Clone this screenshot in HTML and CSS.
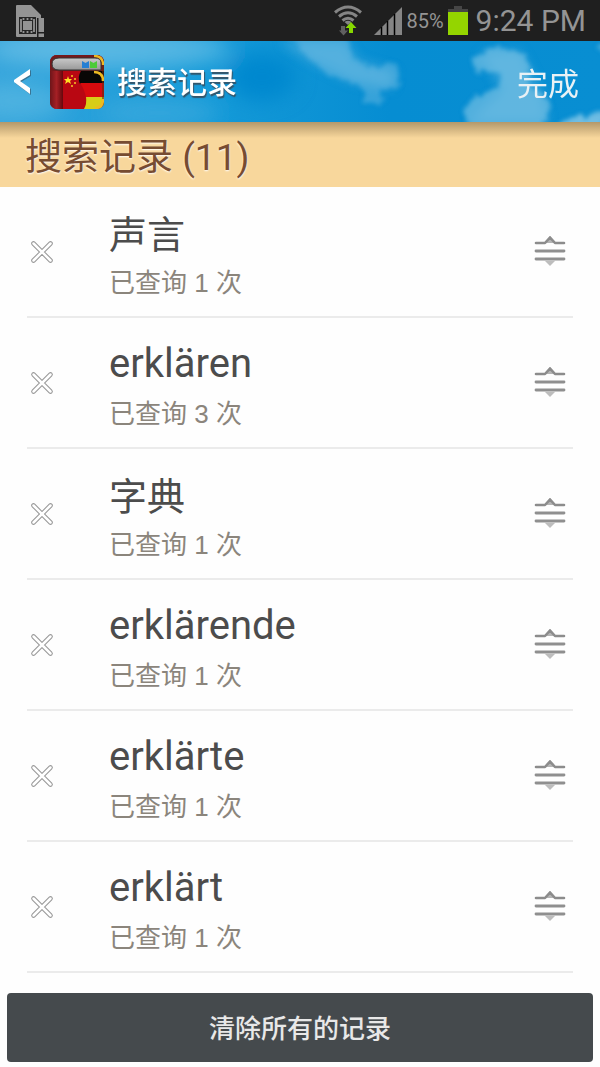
FILE: index.html
```
<!DOCTYPE html>
<html lang="zh-CN">
<head>
<meta charset="utf-8">
<meta name="viewport" content="width=device-width, initial-scale=1">
<title>搜索记录</title>
<link rel="stylesheet" href="styles.css">
</head>
<body>
<svg class="defs" width="0" height="0" aria-hidden="true">
  <defs>
    <symbol id="remove" viewBox="0 0 24 24">
      <path d="M3.500 3.500 20.500 20.500M20.500 3.500 3.500 20.500" stroke="#989898" stroke-width="4.600" stroke-linecap="round"/>
      <path d="M3.500 3.500 20.500 20.500M20.500 3.500 3.500 20.500" stroke="#fff" stroke-width="2.500" stroke-linecap="round"/>
    </symbol>
    <symbol id="drag" viewBox="0 0 32 32">
      <path d="M10 8 16 1 22 8Z" fill="#b5b5b5"/>
      <path d="M2 8H11L16 2.500 21 8H30" fill="none" stroke="#8c8c8c" stroke-width="2.600" stroke-linecap="round" stroke-linejoin="round"/>
      <path d="M2 16H30M2 24H30" stroke="#8f8f8f" stroke-width="2.800" stroke-linecap="round"/>
      <path d="M10.500 25.500H21.500L16 31Z" fill="#bdbdbd"/>
    </symbol>
  </defs>
</svg>

<div class="status">
  <svg class="sim" viewBox="0 0 30 34" aria-hidden="true">
    <path d="M2 1H16L26 11V14H22V33H2Q1 33 1 32V2Q1 1 2 1Z" fill="#949494"/>
    <path d="M4 13H21V30H4Z" fill="#262626"/>
    <path d="M8 17H17V26H8Z" fill="#949494"/>
    <path d="M8.500 14V16M12.500 14V16M16.500 14V16M8.500 27V29M12.500 27V29M16.500 27V29M6 15V28M19 15V28" stroke="#949494" stroke-width="1.800"/>
    <path d="M23.500 14H29V28H23.500ZM23.500 29.500H29V33H23.500Z" fill="#949494"/>
  </svg>
  <svg class="wifi" viewBox="0 0 28 31" aria-hidden="true">
    <g fill="none" stroke="#858585" stroke-width="3">
      <path d="M1 7.500Q14-3.500 27 7.500"/><path d="M5 11.500Q14 4 23 11.500"/><path d="M8.500 15.500Q14 11 19.500 15.500"/>
    </g>
    <path d="M10.500 17Q14 14.500 17.500 17L14 20Z" fill="#858585"/>
    <path d="M7 21H11V25.500H14L9.500 30.500 5 25.500H7Z" fill="#606060"/>
    <path d="M15 28V23H11.500L17 17 22.500 23H19V28Z" fill="#86d800"/>
  </svg>
  <svg class="signal" viewBox="0 0 28 28" aria-hidden="true">
    <path d="M0 28 28 0V28Z" fill="#858585"/>
    <path d="M7.500 20V28M13.500 14V28M20.500 7V28" stroke="#000" stroke-width="1.500"/>
  </svg>
  <span class="percent">85%</span>
  <svg class="battery" viewBox="0 0 20 29" aria-hidden="true"><path d="M6 0H14V3H20V6H0V3H6Z" fill="#464646"/><path d="M0 6H20V29H0Z" fill="#94d500"/></svg>
  <span class="clock">9:24 PM</span>
</div>

<header class="header">
  <svg class="sky" viewBox="0 0 600 81" preserveAspectRatio="xMidYMid slice" aria-hidden="true">
    <defs>
      <linearGradient id="blue"><stop offset="0" stop-color="#35a5dc"/><stop offset=".35" stop-color="#159ad8"/><stop offset=".65" stop-color="#068dd2"/><stop offset="1" stop-color="#088ed2"/></linearGradient>
      <filter id="cloud" x="-20%" y="-40%" width="140%" height="180%">
        <feTurbulence type="fractalNoise" baseFrequency=".12" numOctaves="4" seed="3" result="n"/>
        <feDisplacementMap in="SourceGraphic" in2="n" scale="13" xChannelSelector="R" yChannelSelector="G"/>
        <feGaussianBlur stdDeviation="2"/>
      </filter>
      <filter id="haze" x="-30%" y="-50%" width="160%" height="200%"><feGaussianBlur stdDeviation="10"/></filter>
      <filter id="soft" x="-30%" y="-50%" width="160%" height="200%"><feGaussianBlur stdDeviation="6"/></filter>
    </defs>
    <rect width="600" height="81" fill="url(#blue)"/>
    <g filter="url(#haze)">
      <ellipse cx="110" cy="8" rx="120" ry="20" fill="#7cc8ea" opacity=".6"/>
      <ellipse cx="20" cy="60" rx="45" ry="18" fill="#66bfe6" opacity=".5"/>
      <ellipse cx="160" cy="72" rx="60" ry="14" fill="#4bb2e0" opacity=".5"/>
      <ellipse cx="262" cy="36" rx="34" ry="24" fill="#0088cf"/>
    </g>
    <g filter="url(#soft)" fill="#5fb5e0" opacity=".6">
      <path d="M280 0H346L358 20 396 30 392 48 350 40 310 20Z"/>
      <path d="M480 12 520 10 540 50 548 81H468L503 48Z"/>
    </g>
    <g filter="url(#cloud)" fill="#70bde3">
      <path d="M286-8H346L352 18 372 28 395 22 400 46 380 48 388 60 366 62 358 44 326 32 306 14Z" opacity=".45"/>
      <path d="M472 16 480 12 492 6 522 11 530 28 530 46 552 62 540 92H470L463 70 476 54 498 46 504 32 474 30Z" opacity=".7"/>
      <path d="M558 84 570 78 582 74 604 73V90H558Z"/>
      <path d="M596 4H610V18Z" opacity=".7"/>
    </g>
  </svg>
  <button class="back" aria-label="返回">
    <svg class="chevron" viewBox="0 0 18 28" aria-hidden="true"><path d="M17 2V8L7 14 17 21V27L1 15V13Z" fill="#355b73" opacity=".7"/><path d="M16 1V7L6 13 16 20V26L0 14V12Z" fill="#fff"/></svg>
    <svg class="book" viewBox="0 0 54 54" aria-hidden="true">
      <defs>
        <clipPath id="cover"><rect width="54" height="54" rx="7"/></clipPath>
        <linearGradient id="spine"><stop offset="0" stop-color="#6d1519"/><stop offset=".5" stop-color="#a52025"/><stop offset="1" stop-color="#66080d"/></linearGradient>
        <linearGradient id="pages" x1="0" y1="0" x2="0" y2="1"><stop offset="0" stop-color="#c9c9c9"/><stop offset="1" stop-color="#989898"/></linearGradient>
      </defs>
      <g clip-path="url(#cover)">
        <rect width="54" height="54" fill="#b90712"/>
        <rect width="13" height="54" fill="url(#spine)"/>
        <rect width="54" height="16" fill="#74191b"/>
        <path d="M31 16H54V29H30Q27 22 31 16Z" fill="#090706"/>
        <path d="M30 28H54V43H36Q35 35 30 28Z" fill="#d80b0e"/>
        <path d="M36 42H54V54H34Q37 49 36 42Z" fill="#d8cd17"/>
        <path d="M54 0V54H52V0Z" fill="#6b2a10" opacity=".6"/>
        <path d="M44 1Q53 1 53 10M44 17Q53 17 53 26M53 44Q53 53 45 53" fill="none" stroke="#edb823" stroke-width="2.600"/>
      </g>
      <path d="M9 3H45Q51 3 51 8V15H9Q2 15 2 9T9 3Z" fill="url(#pages)" stroke="#333" stroke-width="1"/>
      <path d="M32 6 35.500 8 39 6V13H32Z" fill="#267fd2"/><path d="M40 6 43.500 8 47 6V13H40Z" fill="#4bcb36"/>
      <path d="M18 21 19 24 22 24 20 26 21 29 18 27 15 29 16 26 14 24 17 24Z" fill="#ffdf24"/>
      <g fill="#f9c927"><circle cx="22" cy="21" r="1"/><circle cx="25" cy="24" r="1"/><circle cx="25" cy="28" r="1"/><circle cx="22" cy="31" r="1"/></g>
    </svg>
  </button>
  <h1 class="title">搜索记录</h1>
  <button class="done">完成</button>
</header>

<main class="main">
  <h2 class="section">搜索记录 (11)</h2>
  <ul class="list">
    <li class="row"><button class="remove" aria-label="删除 声言"><svg class="x"><use href="#remove"/></svg></button><div class="entry"><span class="word">声言</span><span class="count">已查询 1 次</span></div><button class="drag" aria-label="移动 声言"><svg class="grip"><use href="#drag"/></svg></button></li>
    <li class="row"><button class="remove" aria-label="删除 erklären"><svg class="x"><use href="#remove"/></svg></button><div class="entry"><span class="word" lang="de">erklären</span><span class="count">已查询 3 次</span></div><button class="drag" aria-label="移动 erklären"><svg class="grip"><use href="#drag"/></svg></button></li>
    <li class="row"><button class="remove" aria-label="删除 字典"><svg class="x"><use href="#remove"/></svg></button><div class="entry"><span class="word">字典</span><span class="count">已查询 1 次</span></div><button class="drag" aria-label="移动 字典"><svg class="grip"><use href="#drag"/></svg></button></li>
    <li class="row"><button class="remove" aria-label="删除 erklärende"><svg class="x"><use href="#remove"/></svg></button><div class="entry"><span class="word" lang="de">erklärende</span><span class="count">已查询 1 次</span></div><button class="drag" aria-label="移动 erklärende"><svg class="grip"><use href="#drag"/></svg></button></li>
    <li class="row"><button class="remove" aria-label="删除 erklärte"><svg class="x"><use href="#remove"/></svg></button><div class="entry"><span class="word" lang="de">erklärte</span><span class="count">已查询 1 次</span></div><button class="drag" aria-label="移动 erklärte"><svg class="grip"><use href="#drag"/></svg></button></li>
    <li class="row"><button class="remove" aria-label="删除 erklärt"><svg class="x"><use href="#remove"/></svg></button><div class="entry"><span class="word" lang="de">erklärt</span><span class="count">已查询 1 次</span></div><button class="drag" aria-label="移动 erklärt"><svg class="grip"><use href="#drag"/></svg></button></li>
  </ul>
  <button class="clear">清除所有的记录</button>
</main>
</body>
</html>
```
FILE: styles.css
```
* { box-sizing: border-box; }
body { margin: 0; background: #fefefe; font-family: Roboto, "Noto Sans CJK SC", sans-serif; }
button { margin: 0; padding: 0; border: 0; background: none; font: inherit; color: inherit; cursor: pointer; }
svg { display: block; flex: none; }
.defs { position: absolute; }

.status { display: flex; align-items: center; height: 41px; padding: 0 14px 0 15px; background: #1f1f1f; color: #949494; }
.sim { width: 30px; height: 34px; margin-right: auto; }
.wifi { width: 28px; height: 31px; margin-right: 12px; }
.signal { width: 28px; height: 28px; margin-right: 4px; }
.percent { font-size: 20px; margin-right: 4px; }
.battery { width: 20px; height: 29px; margin-right: 8px; }
.clock { font-size: 30px; }

.header { position: relative; display: flex; align-items: center; height: 81px; padding: 0 21px 0 14px; color: #fff; overflow: hidden; background: #128fd2; }
.sky { position: absolute; inset: 0; width: 100%; height: 100%; }
.back { position: relative; display: flex; align-items: center; gap: 18px; }
.chevron { width: 18px; height: 28px; }
.book { width: 54px; height: 54px; }
.title { position: relative; margin: 0 auto 0 13px; padding-top: 2px; font-size: 30px; line-height: 40px; font-weight: 500; text-shadow: 1px 2px 1px #34556a; }
.done { position: relative; padding-top: 6px; font-size: 31px; line-height: 40px; color: #e9f1f5; }

.section { margin: 0; padding: 12px 25px 5px; background: linear-gradient(#b3986a, #f8d79c 16px); color: #774c31; font-size: 37px; line-height: 48px; font-weight: 400; text-shadow: 0 1px 2px #fff; }
.list { margin: 0; padding: 0 27px; list-style: none; }
.row { display: flex; align-items: center; height: 131px; border-bottom: 2px solid #ebebeb; }
.remove { padding: 3px; }
.x { width: 24px; height: 24px; }
.entry { display: flex; flex-direction: column; flex: 1; padding: 6px 0 0 52px; }
.word { font-size: 38px; line-height: 56px; color: #4c4c4c; }
.word:lang(de) { padding-bottom: 4px; font-size: 40px; line-height: 52px; }
.count { font-family: "Liberation Sans", "Noto Sans CJK SC", sans-serif; font-size: 26px; line-height: 40px; color: #8b857c; }
.drag { padding: 7px 7px 9px; }
.grip { width: 32px; height: 32px; }
.clear { display: block; width: calc(100% - 14px); height: 69px; margin: 20px 7px 5px; padding-bottom: 3px; border-radius: 4px; background: #454a4d; color: #e8e8e8; font-size: 26px; font-weight: 500; }
```
